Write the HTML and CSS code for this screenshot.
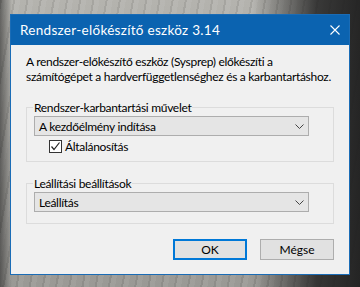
FILE: index.html
```html
<!DOCTYPE html>
<html>
    <head>
        <title>Rendszer-előkészítő eszköz 3.14</title>
        <meta charset="utf-8">
        <link rel="stylesheet" href="styles.css">
    </head>
    <body>
        <div class="dialog">
            <div class="titlebar">
                <span class="title">Rendszer-előkészítő eszköz 3.14</span>
                <svg class="close" width="10" height="10" viewBox="0 0 10 10">
                    <path d="M0.5 0.5 L9.5 9.5 M9.5 0.5 L0.5 9.5" stroke="#fff" stroke-width="1.1" fill="none"/>
                </svg>
            </div>

            <div class="content">
                <p class="intro">A rendszer-előkészítő eszköz (Sysprep) előkészíti a<br>számítógépet a hardverfüggetlenséghez és a karbantartáshoz.</p>

                <fieldset class="group">
                    <legend>Rendszer-karbantartási művelet</legend>
                    <div class="combo">
                        <span>A kezdőélmény indítása</span>
                        <svg class="chevron" width="9" height="5" viewBox="0 0 9 5">
                            <path d="M0.5 0.5 L4.5 4.5 L8.5 0.5" stroke="#444" stroke-width="1" fill="none"/>
                        </svg>
                    </div>
                    <label class="check">
                        <span class="box">
                            <svg width="11" height="11" viewBox="0 0 11 11">
                                <path d="M1.5 5.5 L4 8.5 L9.5 1.5" stroke="#222" stroke-width="1.2" fill="none"/>
                            </svg>
                        </span>
                        Általánosítás
                    </label>
                </fieldset>

                <fieldset class="group second">
                    <legend>Leállítási beállítások</legend>
                    <div class="combo">
                        <span>Leállítás</span>
                        <svg class="chevron" width="9" height="5" viewBox="0 0 9 5">
                            <path d="M0.5 0.5 L4.5 4.5 L8.5 0.5" stroke="#444" stroke-width="1" fill="none"/>
                        </svg>
                    </div>
                </fieldset>

                <div class="buttons">
                    <button class="btn btn-default">OK</button>
                    <button class="btn">Mégse</button>
                </div>
            </div>
        </div>
    </body>
</html>
```

FILE: styles.css
```css
/* ---- General ---- */
* {
    box-sizing: border-box;
    font-family: Lato, 'Noto Sans', sans-serif;
}

body {
    margin: 0;
    padding: 14px 0 0 10px;
    height: 287px;
    overflow: hidden;
    background-color: #9d9c98;
    background-image:
        linear-gradient(to right, rgba(30, 30, 30, .55) 0, rgba(30, 30, 30, 0) 12px),
        linear-gradient(to right, rgba(0, 0, 0, 0) 70%, rgba(35, 35, 35, .85) 88%, rgba(30, 30, 30, .95) 100%),
        repeating-linear-gradient(100deg, rgba(0, 0, 0, .08) 0 2px, rgba(255, 255, 255, .06) 2px 7px, rgba(0, 0, 0, 0) 7px 13px),
        linear-gradient(to bottom, #b4b3ae 0%, #9a9995 100%);
}

/* ---- Dialog ---- */
.dialog {
    background-color: #f0f0f0;
    border: 1px solid #1a6cb6;
    display: flex;
    flex-direction: column;
    height: 261px;
    width: 340px;
}

.titlebar {
    align-items: center;
    background-color: #0b63b0;
    color: #fff;
    display: flex;
    height: 30px;
    justify-content: space-between;
    padding: 0 9px 0 9px;
}

.title {
    font-size: 13.5px;
    letter-spacing: .3px;
}

.content {
    display: flex;
    flex: 1;
    flex-direction: column;
    font-size: 12px;
    letter-spacing: -.3px;
    padding: 9px 15px 14px 15px;
}

.intro {
    line-height: 15px;
    margin: 0;
    white-space: nowrap;
}

/** Group boxes */
.group {
    border: 1px solid #dcdcdc;
    margin: 16px 0 0 0;
    padding: 0 7px 7px 7px;
}

.group.second {
    margin-top: 14px;
    padding-bottom: 11px;
}

.group legend {
    line-height: 15px;
    margin-left: -1px;
    padding: 0 1px;
}

.combo {
    align-items: center;
    background-color: #e5e5e5;
    border: 1px solid #adadad;
    display: flex;
    height: 20px;
    justify-content: space-between;
    margin-top: 1px;
    padding: 0 4px 0 4px;
    width: 275px;
}

.check {
    align-items: center;
    display: flex;
    gap: 3px;
    line-height: 15px;
    margin: 3px 0 0 15px;
}

.box {
    align-items: center;
    background-color: #fff;
    border: 1px solid #333;
    display: flex;
    height: 13px;
    justify-content: center;
    width: 13px;
}

/** Buttons */
.buttons {
    display: flex;
    gap: 13px;
    justify-content: flex-end;
    margin-top: auto;
}

.btn {
    background-color: #e1e1e1;
    border: 1px solid #adadad;
    color: #000;
    font-size: 12px;
    height: 21px;
    letter-spacing: 0;
    padding: 0;
    width: 74px;
}

.btn-default {
    border: 2px solid #0078d7;
}
```
